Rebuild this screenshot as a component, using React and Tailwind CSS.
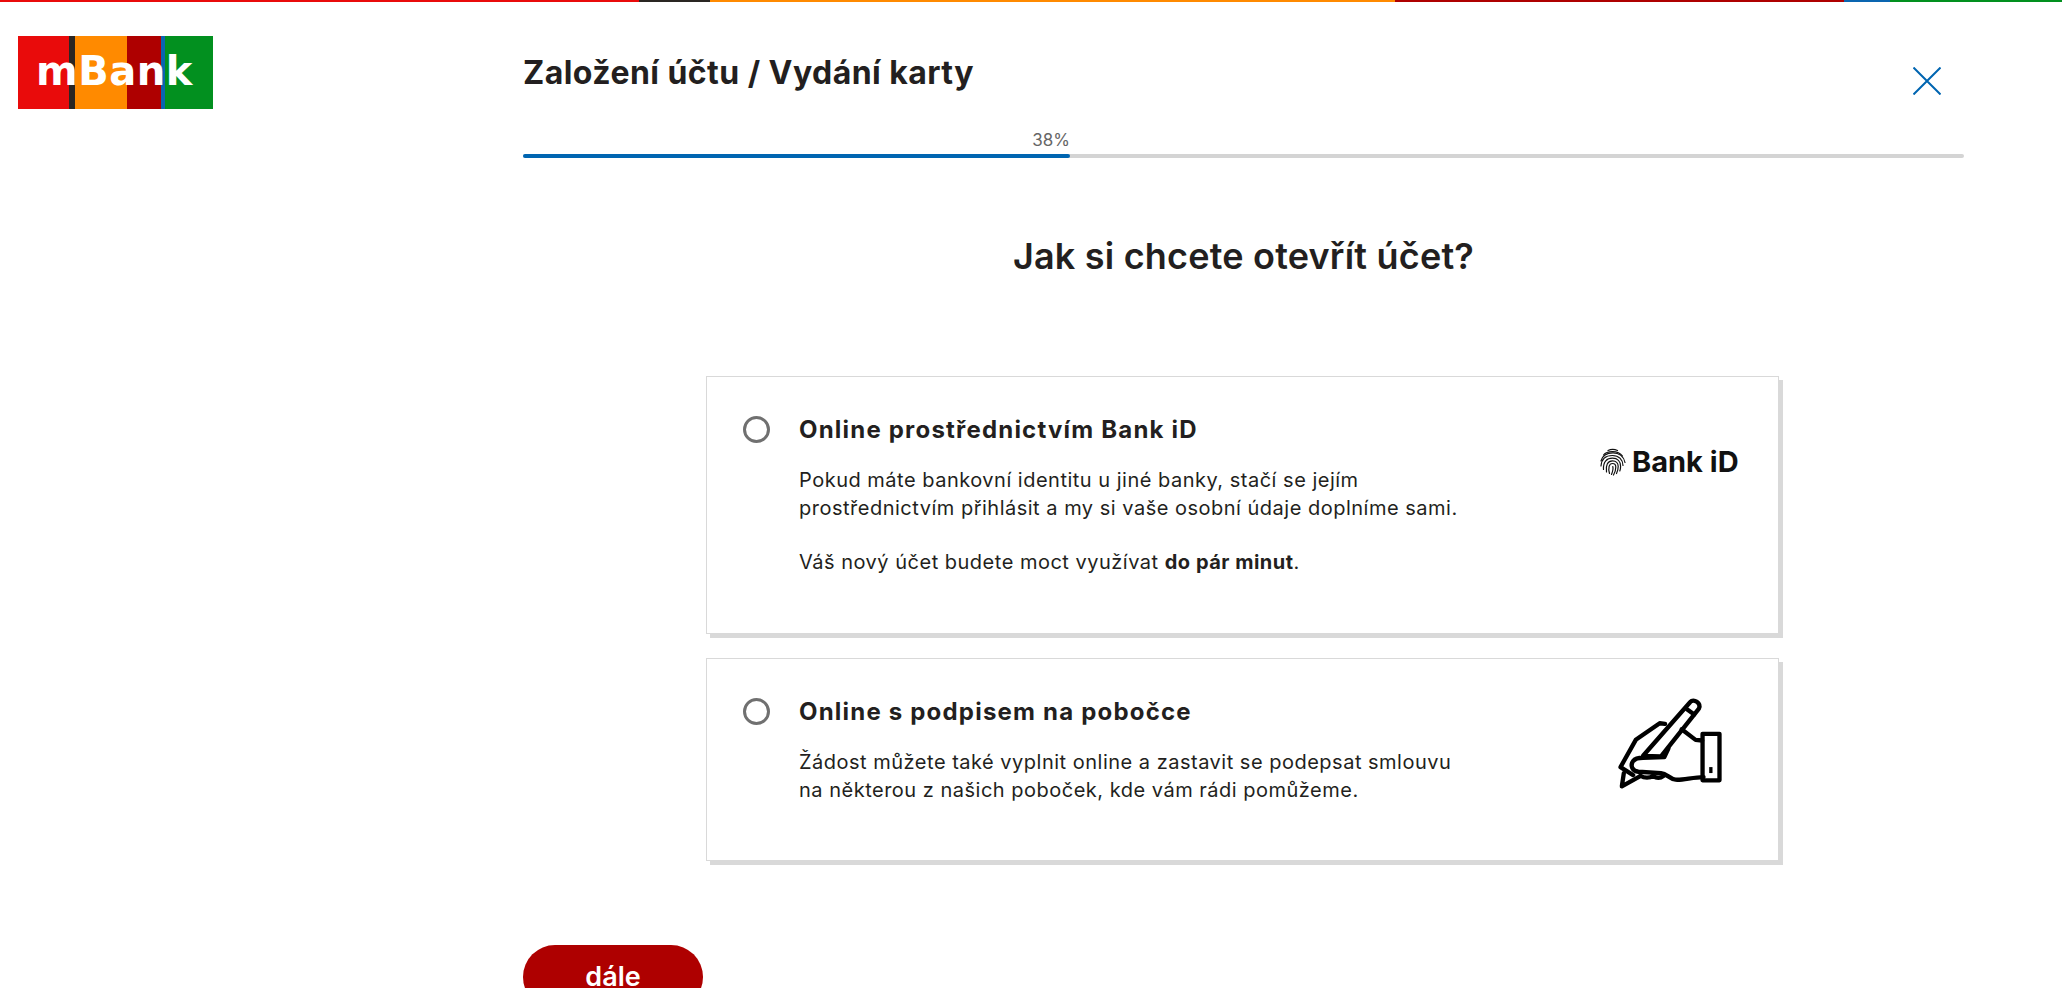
import React from 'react';

const Logo = () => (
  <div className="relative w-[195px] h-[73px] flex overflow-hidden">
    <div className="w-[51px] bg-[#e90b0b]" />
    <div className="w-[6px] bg-[#2a2623]" />
    <div className="w-[52px] bg-[#ff8a00]" />
    <div className="w-[34px] bg-[#ae0000]" />
    <div className="w-[4px] bg-[#0a65b0]" />
    <div className="w-[48px] bg-[#02901f]" />
    <span className="absolute left-[18px] top-[5px] text-white text-[40px] leading-[60px] font-bold font-['DejaVu_Sans',sans-serif] tracking-[0.5px]">mBank</span>
  </div>
);

const Fingerprint = () => (
  <svg viewBox="0 0 28 28" className="w-[28px] h-[28px]" fill="none" stroke="#111" strokeWidth="1.2" strokeLinecap="round">
    <path d="M9 2.5C11.5 1.2 15.5 1 18.5 2.5" />
    <path d="M4.5 7C8 2.5 19 2 23.5 8" />
    <path d="M2 13C3.5 7 9 4.8 14 4.8C20 4.8 25 8.5 26 14.5" />
    <path d="M2 18C2.5 11 7 7.5 13.5 7.5C20 7.5 24 12 24 17.5" />
    <path d="M4.5 21.5C4 13.5 8 10.2 13.5 10.2C18.5 10.2 21.6 13.5 21.6 18.5C21.6 20 21.4 21.5 20.8 23" />
    <path d="M7.5 24C6.5 17 8.8 12.8 13.5 12.8C17 12.8 19.2 15.2 19.2 18.5C19.2 21 18.5 23.5 17.5 25.5" />
    <path d="M10.5 25.5C9 20 10 15.5 13.5 15.5C15.8 15.5 16.8 17 16.8 19C16.8 22 15.8 25 14.5 27" />
    <path d="M13.8 18.5C14.5 21 13.5 24 12.5 26.5" />
  </svg>
);

const SignHand = () => (
  <svg viewBox="85 55 315 280" className="w-[105px] h-[93px]" fill="none" stroke="#000" strokeWidth="13" strokeLinejoin="round" strokeLinecap="round">
    <path d="M302 70C312 58 336 74 328 90L214 234L160 232Z" />
    <path d="M292 92L314 108" />
    <path d="M226 136L210 134L138 184L92 266L130 290" />
    <path d="M102 284L96 324L150 294" />
    <path d="M276 152L318 184L338 186" />
    <path d="M339 166H390V306H339Z" />
    <path d="M342 296C310 296 280 306 258 304C240 302 232 286 214 284L146 280C128 278 120 262 130 248C136 240 150 238 160 238L224 236L236 210" />
    <path d="M152 292C164 300 180 300 190 292C200 300 212 300 222 292" />
    <path d="M364 266V284" strokeWidth="10" strokeLinecap="butt" />
  </svg>
);

const Radio = () => (
  <div className="w-[27px] h-[27px] shrink-0 rounded-full border-[3px] border-[#707070] bg-white" />
);

const Option = ({ title, icon, className, children }) => (
  <div className={`flex border border-[#d9d9d9] bg-white shadow-[4px_4px_0_#d9d9d9] pl-[36px] ${className}`}>
    <Radio />
    <div className="ml-[29px] w-[680px] shrink-0">
      <h3 className="text-[24px] leading-[27px] font-bold text-[#231f20] tracking-[1.2px] whitespace-nowrap">{title}</h3>
      <div className="mt-[23px] text-[20px] leading-[28px] text-[#231f20] tracking-[0.5px] whitespace-nowrap">{children}</div>
    </div>
    {icon}
  </div>
);

export default function App() {
  return (
    <div className="h-screen overflow-hidden bg-white font-['Inter',sans-serif] text-[#231f20]">
      <div className="flex h-[2px]">
        <div className="w-[639px] bg-[#e90b0b]" />
        <div className="w-[71px] bg-[#2a2623]" />
        <div className="w-[685px] bg-[#ff8a00]" />
        <div className="w-[449px] bg-[#ae0000]" />
        <div className="w-[46px] bg-[#0a65b0]" />
        <div className="flex-1 bg-[#02901f]" />
      </div>

      <div className="flex">
        <div className="w-[523px] pl-[18px] pt-[34px]">
          <Logo />
        </div>

        <main className="w-[1441px]">
          <div className="flex items-start justify-between pt-[53px] pr-[23px]">
            <h1 className="text-[32px] leading-[36px] font-bold tracking-[0.45px]">Založení účtu / Vydání karty</h1>
            <svg viewBox="0 0 28 28" className="w-[28px] h-[28px] mt-[12px]" stroke="#0065b1" strokeWidth="2">
              <path d="M0.5 0.5L27.5 27.5M27.5 0.5L0.5 27.5" />
            </svg>
          </div>

          <div className="mt-[35px]">
            <div className="text-[17px] leading-[20px] text-[#666] w-[547px] text-right">38%</div>
            <div className="mt-[4px] h-[4px] rounded-full bg-[#d4d4d4]">
              <div className="h-full w-[547px] rounded-full bg-[#0065b1]" />
            </div>
          </div>

          <h2 className="mt-[74px] text-center text-[36px] leading-[48px] font-semibold tracking-[0.2px]">Jak si chcete otevřít účet?</h2>

          <div className="ml-[183px] mt-[96px] w-[1073px] flex flex-col gap-[24px]">
            <Option
              title="Online prostřednictvím Bank iD"
              className="h-[258px] pt-[39px]"
              icon={
                <div className="ml-[120px] mt-[32px] flex items-start gap-[5px] h-[30px] shrink-0">
                  <Fingerprint />
                  <span className="text-[29px] leading-[28px] font-bold text-[#111]">Bank iD</span>
                </div>
              }
            >
              <p>Pokud máte bankovní identitu u jiné banky, stačí se jejím<br />prostřednictvím přihlásit a my si vaše osobní údaje doplníme sami.</p>
              <p className="mt-[26px]">Váš nový účet budete moct využívat <b>do pár minut</b>.</p>
            </Option>
            <Option
              title="Online s podpisem na pobočce"
              className="h-[203px] pt-[39px]"
              icon={
                <div className="ml-[139px] -mt-[1px] shrink-0">
                  <SignHand />
                </div>
              }
            >
              <p>Žádost můžete také vyplnit online a zastavit se podepsat smlouvu<br />na některou z našich poboček, kde vám rádi pomůžeme.</p>
            </Option>
          </div>

          <button className="mt-[84px] w-[180px] h-[64px] rounded-full bg-[#ae0000] text-white text-[27px] leading-[20px] font-semibold">dále</button>
        </main>
      </div>
    </div>
  );
}
